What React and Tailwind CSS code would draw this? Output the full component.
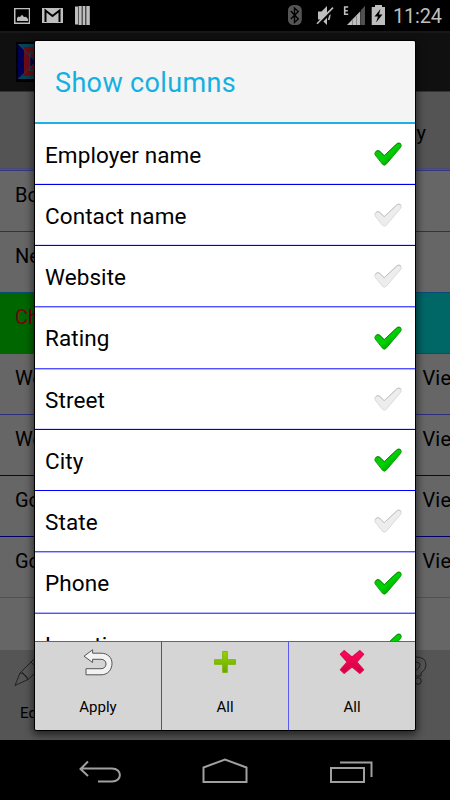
import React from 'react';

// Columns offered in the dialog; `line` is the separator under the row
const COLUMNS = [
  { name: 'Employer name', on: true, height: 'h-[61px]', line: 'border-b border-[#0000e6] shadow-[inset_0_-1px_0_#dcdcff]' },
  { name: 'Contact name', on: false, height: 'h-[61px]', line: 'border-b border-[#0000e6] shadow-[inset_0_-1px_0_#dcdcff]' },
  { name: 'Website', on: false, height: 'h-[61px]', line: 'border-b border-[#5252ff] shadow-[0_1px_0_#b4b4ff]' },
  { name: 'Rating', on: true, height: 'h-[62px]', line: 'border-b border-[#5252ff] shadow-[0_1px_0_#b4b4ff]' },
  { name: 'Street', on: false, height: 'h-[61px]', line: 'border-b border-[#0000e6] shadow-[inset_0_-1px_0_#dcdcff]' },
  { name: 'City', on: true, height: 'h-[61px]', line: 'border-b border-[#0000ff]' },
  { name: 'State', on: false, height: 'h-[61px]', line: 'border-b border-[#5252ff] shadow-[0_1px_0_#b4b4ff]' },
  { name: 'Phone', on: true, height: 'h-[62px]', line: 'border-b border-[#5252ff] shadow-[inset_0_-1px_0_#b4b4ff]' },
  { name: 'Location', on: true, height: 'h-[61px]', line: '' },
];

const EMPLOYERS = [
  { name: 'Bo', city: '', look: 'border-[#2d2d6c]' },
  { name: 'Ne', city: '', look: 'border-[#0b4a78]' },
  { name: 'Ch', city: '', look: 'border-[#0b4a78]', active: true },
  { name: 'We', city: 'n View', look: 'border-[#2d2d80]' },
  { name: 'We', city: 'n View', look: 'border-[#00006c]' },
  { name: 'Go', city: 'n View', look: 'border-[#00006c]' },
  { name: 'Go', city: 'n View', look: 'border-[#4c4c7c]' },
];

// ── Icons ─────────────────────────────────────────────────────────────────────
function Check({ on }) {
  return (
    <svg viewBox="0 0 28 24" className="w-7 h-6 shrink-0">
      <defs>
        <linearGradient id="checkOn" x1="0" y1="0" x2="1" y2="1">
          <stop offset="0.3" stopColor="#08c808" />
          <stop offset="0.5" stopColor="#00d400" />
          <stop offset="0.8" stopColor="#009a00" />
        </linearGradient>
      </defs>
      <path d="M1.3 10.2 Q3.2 7.4 5.7 9.3 L10.2 13.7 L23.3 1.5 Q25.2 .5 26.8 2 Q27.8 3.8 26.6 5.4 L12.2 22.3 Q10.3 24 8.5 22.3 L1.2 13 Q.4 11.5 1.3 10.2 Z"
        fill={on ? 'url(#checkOn)' : '#ededed'} stroke={on ? '#079a07' : '#d6d6d6'} strokeWidth=".9" />
      <path d="M1.3 10.2 Q3.2 7.4 5.7 9.3 L10.2 13.7 L23.3 1.5 Q25.2 .5 26.8 2" fill="none"
        stroke={on ? '#088808' : '#bdbdbd'} strokeWidth=".9" />
    </svg>
  );
}

function ApplyIcon() {
  return (
    <svg viewBox="0 0 30 28" className="w-[30px] h-7">
      <path d="M1 7.2 L9.6 .8 V4.2 H18 C24.5 4.2 29 8.3 29 14.3 C29 21 24.6 25.8 18 25.8 H3 V19.7 H18 C21 19.7 23 17.8 23 15 C23 12.2 21 10.3 18 10.3 H9.6 V13.5 Z"
        fill="#f2f2f2" stroke="#555" strokeWidth="1" strokeLinejoin="round" />
    </svg>
  );
}

function PlusIcon() {
  return (
    <svg viewBox="0 0 24 24" className="w-6 h-6">
      <defs>
        <linearGradient id="plus" x1="0" y1="0" x2="0" y2="1">
          <stop offset="0" stopColor="#9ad400" />
          <stop offset="1" stopColor="#67a800" />
        </linearGradient>
      </defs>
      <path d="M9.7 1.5 H14.3 V9.7 H22.5 V14.3 H14.3 V22.5 H9.7 V14.3 H1.5 V9.7 H9.7 Z"
        fill="url(#plus)" stroke="#7db50b" strokeWidth="1" strokeLinejoin="round" />
    </svg>
  );
}

function CrossIcon() {
  return (
    <svg viewBox="0 0 26 26" className="w-[26px] h-[26px]">
      <defs>
        <linearGradient id="cross" x1="0" y1="0" x2="0" y2="1">
          <stop offset="0" stopColor="#ff0a5c" />
          <stop offset="1" stopColor="#d00044" />
        </linearGradient>
      </defs>
      <path d="M5.2 1.7 L13 8.2 L20.8 1.7 L24.5 5.2 L17.6 13 L24.5 20.8 L20.8 24.3 L13 17.8 L5.2 24.3 L1.5 20.8 L8.4 13 L1.5 5.2 Z"
        fill="url(#cross)" stroke="#e00a50" strokeWidth="1.4" strokeLinejoin="round" />
    </svg>
  );
}

// ── Status bar ────────────────────────────────────────────────────────────────
function StatusBar() {
  return (
    <div className="h-[31px] bg-black flex items-center justify-between text-[#bebebe]">
      <svg viewBox="0 0 100 31" className="w-[100px] h-[31px]" fill="currentColor">
        <path fillRule="evenodd" d="M14 8 H30 V24 H14 Z M15.5 9.2 V22.5 H28.8 V9.2 Z" />
        <path d="M17 21 V18 L18.5 16.5 L20 17 L22 14.8 L24 17 L26 16.8 L28 19 V21 Z" />
        <path d="M42 8 H63 V23 H42 Z" />
        <path d="M45.5 22 V10.5 L52.5 16 L59.5 10.5 V22" fill="none" stroke="#000" strokeWidth="2" />
        <path d="M75 6.5 H78 V24.5 H75 Z M79 6 H81.8 V25 H79 Z M83 6 H85.2 V25 H83 Z M86.2 6 H89.8 V25 H86.2 Z" />
        <path d="M78 6 H79 V25 H78 Z M81.8 6 H83 V25 H81.8 Z M85.2 6 H86.2 V25 H85.2 Z" fill="#555" />
      </svg>
      <div className="flex items-center">
        <svg viewBox="285 0 105 31" className="w-[105px] h-[31px]" fill="currentColor">
          <rect x="288" y="5" width="13.8" height="20" rx="5.5" fill="#555" />
          <path d="M290.8 11 L298.3 19 L294.5 22.5 V8 L298.3 11.5 L290.8 19" fill="none" stroke="#000" strokeWidth="1.4" />
          <path d="M318 11.5 H321.5 L327 6 V25 L321.5 19.5 H318 Z" />
          <path d="M328.5 11 Q331 15 328.5 20" fill="none" stroke="currentColor" strokeWidth="1.6" />
          <path d="M318 25 L334 8.8" stroke="#000" strokeWidth="2.5" />
          <path d="M317 23.8 L333 7.6" stroke="currentColor" strokeWidth="1.6" />
          <path d="M348.2 7 H344.7 V14.3 H348.2 M344.7 10.7 H347.8" fill="none" stroke="currentColor" strokeWidth="1.6" />
          <path d="M347 25 L360.3 11.2 V25 Z" />
          <path d="M361 10 L365 6 V25 H361 Z" fill="#505050" />
          <path d="M352.5 20 V25 M356.5 16 V25" stroke="#888" strokeWidth="1" />
          <path d="M371.7 7 H375 V5 H382 V7 H385 V25 H371.7 Z" />
          <path d="M380.5 9 L374.5 16.5 H378 L376 22.5 L382.5 14.5 H379 Z" fill="#000" />
        </svg>
        <span className="w-[60px] pl-[3px] pt-px text-[20px] leading-none tracking-[-0.2px] whitespace-nowrap">11:24</span>
      </div>
    </div>
  );
}

// ── Dimmed employer list behind the dialog ────────────────────────────────────
function EmployerList() {
  return (
    <div className="h-[709px] flex flex-col bg-[#666] text-black text-[20px]">
      <div className="h-[60px] shrink-0 bg-[#101010] border-t-2 border-[#181818] pt-[9px] pl-4">
        <svg viewBox="0 0 40 40" className="w-10 h-10">
          <path d="M0 0 H40 V40 H0 Z" fill="#000" />
          <path d="M2 2 H38 L20 20 Z M2 37 H38 L20 20 Z" fill="#064258" />
          <path d="M2 2 L20 20 L2 37 Z" fill="#000058" />
          <path d="M8 5 H34 V34 H8 Z" fill="#6c0c14" />
          <path d="M13 10 H34 V29 H13 Z" fill="#064258" />
          <path d="M14.5 11 L34 16 V24 L14.5 28 Z" fill="#6c0c14" />
          <path d="M14.5 14 L20 19.5 L14.5 25 Z" fill="#000058" />
          <path d="M2 2 L20 20 L2 37" fill="none" stroke="#24485c" strokeWidth=".7" />
        </svg>
      </div>
      <div className="h-[80px] shrink-0 bg-[#545454] border-t border-[#303050] flex justify-end pr-6 pt-[26px] shadow-[inset_0_-1px_0_#373780,inset_0_-2px_0_#545460,inset_0_-3px_0_#4a4a78]">
        <span>City</span>
      </div>
      {EMPLOYERS.map((row, i) => (
        <div key={i}
          className={`h-[61px] shrink-0 border-b flex justify-between whitespace-nowrap leading-[28px] ${row.look}`}>
          <div className={`w-[225px] pl-[15px] pt-[10px] ${row.active ? 'bg-[#006600] text-[#7c0014]' : ''}`}>
            {row.name}
          </div>
          <div className={`w-[225px] pt-[10px] pl-[181px] tracking-[0.2px] ${row.active ? 'bg-[#006666]' : ''}`}>
            {row.city}
          </div>
        </div>
      ))}
      <div className="mt-auto h-[90px] shrink-0 bg-[#555] flex justify-between pt-[6px] text-[15px]">
        <div className="pl-[14px]">
          <svg viewBox="0 0 32 32" className="w-8 h-8" fill="none" stroke="#222" strokeWidth="1">
            <path d="M1 29.5 L6 17 L21 2 L29 10 L14 23.5 Z M6 17 Q12.5 18 14 23.5 M8 16 L14 23.5 M17 6 L25 14" />
          </svg>
          <div className="pl-[6px] pt-[14px]">Edit</div>
        </div>
        <svg viewBox="0 0 24 30" className="w-6 h-[30px] mr-[23px]" fill="none" stroke="#222" strokeWidth="1">
          <path d="M4 9 Q4 1 13 1 Q23 1 23 9 Q23 14 18 17 V20 H12 V15 Q17 12 17 9 Q17 6 13 6 Q10 6 9 9 Z" />
          <circle cx="15" cy="25" r="3.3" />
        </svg>
      </div>
    </div>
  );
}

// ── Dialog ────────────────────────────────────────────────────────────────────
function ShowColumnsDialog() {
  return (
    <div className="absolute left-[35px] top-[41px] w-[380px] h-[689px] flex flex-col bg-white rounded-[2px] overflow-hidden shadow-[0_0_0_1px_#000,0_3px_9px_2px_rgba(0,0,0,0.6)]">
      <h2 className="h-[83px] shrink-0 bg-[#f4f4f4] border-b-2 border-[#1cb2e4] pl-[20px] pt-[3px] flex items-center text-[27px] tracking-[0.36px] text-[#14b0e2]">
        Show columns
      </h2>
      <div className="flex-1 min-h-0 overflow-hidden">
        {COLUMNS.map(col => (
          <div key={col.name}
            className={`flex items-center justify-between pl-[10px] pr-[13px] text-[22.5px] tracking-[0.08px] text-black ${col.height} ${col.line}`}>
            <span className="pt-[3px]">{col.name}</span>
            <Check on={col.on} />
          </div>
        ))}
      </div>
      <div className="h-[89px] shrink-0 grid grid-cols-[127px_127px_126px] bg-[#d5d5d5] border-t border-[#5252ff] text-[15px] text-black">
        <button className="flex flex-col items-center border-r border-[#4545e6]">
          <span className="h-[43px] pt-[7px]"><ApplyIcon /></span>
          <span className="pt-[11px]">Apply</span>
        </button>
        <button className="flex flex-col items-center border-r border-[#5a5aee]">
          <span className="h-[43px] pt-[8px]"><PlusIcon /></span>
          <span className="pt-[11px]">All</span>
        </button>
        <button className="flex flex-col items-center">
          <span className="h-[43px] pt-[7px]"><CrossIcon /></span>
          <span className="pt-[11px]">All</span>
        </button>
      </div>
    </div>
  );
}

function NavBar() {
  return (
    <div className="h-[60px] bg-black">
      <svg viewBox="0 740 450 60" className="w-[450px] h-[60px]" fill="none" stroke="#a0a0a0" strokeWidth="2">
        <path d="M88 761.5 L80.5 769 L88 776 M81 768.5 H112 C122.5 768.5 122.5 781.5 112 781.5 H98" />
        <path d="M203.5 782 V767.5 L225 759.5 L246.5 767.5 V782 Z" />
        <path d="M331 768 H364 V782 H331 Z M340 762.5 H371.5 V777" />
      </svg>
    </div>
  );
}

export default function App() {
  return (
    <div className="relative w-[450px] h-[800px] overflow-hidden bg-black font-['Roboto',sans-serif]">
      <StatusBar />
      <EmployerList />
      <NavBar />
      <ShowColumnsDialog />
    </div>
  );
}
